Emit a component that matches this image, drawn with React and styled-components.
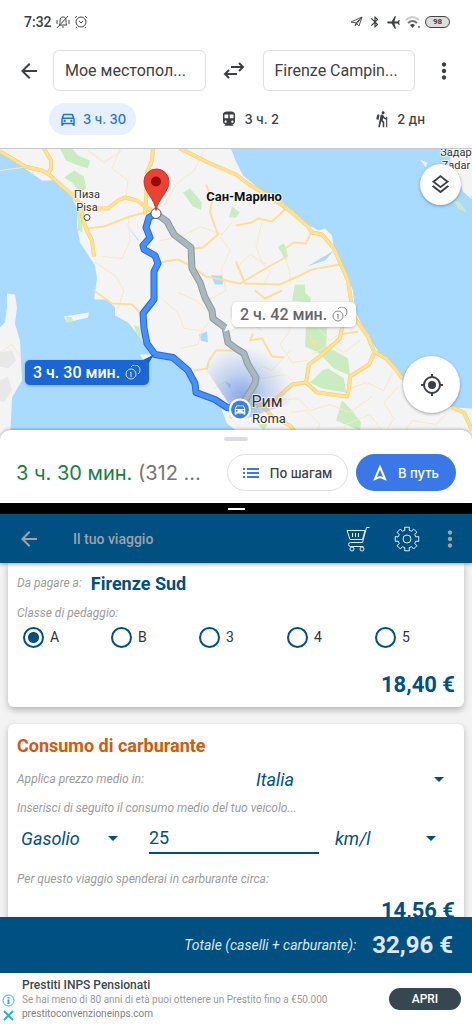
import { useState } from "react";
import styled, { createGlobalStyle, css } from "styled-components";
import {
  MdAirplanemodeActive,
  MdArrowBack,
  MdArrowDropDown,
  MdBluetooth,
  MdDirectionsCar,
  MdDirectionsTransit,
  MdHiking,
  MdMoreVert,
  MdOutlineDirectionsCar,
  MdOutlineLayers,
} from "react-icons/md";

const classes = ["A", "B", "3", "4", "5"];

function App() {
  return (
    <Screen>
      <GlobalStyle />
      <StatusBar />
      <Directions />
      <SplitHandle>
        <SplitGrip />
      </SplitHandle>
      <Trip />
    </Screen>
  );
}

export default App;

function StatusBar() {
  return (
    <StatusRow>
      <StatusGroup>
        <Clock>7:32</Clock>
        <BellOffIcon />
        <AlarmIcon />
      </StatusGroup>
      <StatusGroup>
        <PlaneOutlineIcon />
        <MdBluetooth size={14} />
        <Airplane size={15} />
        <WifiIcon />
        <Battery>98</Battery>
      </StatusGroup>
    </StatusRow>
  );
}

function Directions() {
  return (
    <>
      <SearchRow>
        <IconButton aria-label="Назад">
          <MdArrowBack size={24} />
        </IconButton>
        <PlaceInput aria-label="Откуда" defaultValue="Мое местопол..." />
        <IconButton aria-label="Поменять местами">
          <SwapIcon />
        </IconButton>
        <PlaceInput aria-label="Куда" defaultValue="Firenze Campin..." />
        <IconButton aria-label="Меню">
          <MdMoreVert size={26} />
        </IconButton>
      </SearchRow>
      <Modes>
        <Mode $active>
          <MdOutlineDirectionsCar size={18} />3 ч. 30
        </Mode>
        <Mode>
          <MdDirectionsTransit size={18} />3 ч. 2
        </Mode>
        <Mode>
          <MdHiking size={18} />2 дн
        </Mode>
      </Modes>
      <MapArea>
        <MapDrawing />
        <Callout $main>
          3 ч. 30 мин. <TollIcon />
        </Callout>
        <Callout>
          2 ч. 42 мин. <TollIcon />
        </Callout>
        <LayersButton aria-label="Слои">
          <MdOutlineLayers size={23} />
        </LayersButton>
        <LocateButton aria-label="Мое местоположение">
          <LocateIcon />
        </LocateButton>
      </MapArea>
      <Sheet>
        <SheetGrip />
        <SheetRow>
          <Duration>
            3 ч. 30 мин. <Distance>(312 ...</Distance>
          </Duration>
          <StepsButton>
            <StepsIcon />
            По шагам
          </StepsButton>
          <GoButton>
            <NavigateIcon />В путь
          </GoButton>
        </SheetRow>
      </Sheet>
    </>
  );
}

function Trip() {
  const [tollClass, setTollClass] = useState("A");

  return (
    <>
      <Toolbar>
        <ToolButton aria-label="Indietro">
          <MdArrowBack size={24} />
        </ToolButton>
        <ToolTitle>Il tuo viaggio</ToolTitle>
        <ToolButton aria-label="Carrello" $light>
          <CartIcon />
        </ToolButton>
        <ToolButton aria-label="Impostazioni" $light>
          <GearIcon />
        </ToolButton>
        <ToolButton aria-label="Menu">
          <MdMoreVert size={26} />
        </ToolButton>
      </Toolbar>
      <Cards>
        <TollCard>
          <ExitRow>
            <Hint>Da pagare a:</Hint>
            <ExitName>Firenze Sud</ExitName>
          </ExitRow>
          <ClassSet>
            <ClassLegend>Classe di pedaggio:</ClassLegend>
            <ClassGrid>
              {classes.map((c) => (
                <ClassLabel key={c}>
                  <Radio
                    type="radio"
                    name="toll-class"
                    value={c}
                    checked={tollClass === c}
                    onChange={() => setTollClass(c)}
                  />
                  {c}
                </ClassLabel>
              ))}
            </ClassGrid>
          </ClassSet>
          <TollPrice>18,40 €</TollPrice>
        </TollCard>
        <FuelCard>
          <FuelTitle>Consumo di carburante</FuelTitle>
          <CountryRow>
            <Hint as="label" htmlFor="country">
              Applica prezzo medio in:
            </Hint>
            <Picker id="country" options={["Italia"]} end={4} />
          </CountryRow>
          <Hint as="label" htmlFor="consumption">
            Inserisci di seguito il consumo medio del tuo veicolo...
          </Hint>
          <UsageRow>
            <Picker label="Carburante" options={["Gasolio", "Benzina"]} end={8} />
            <UsageInput id="consumption" defaultValue="25" />
            <Picker label="Unità" options={["km/l"]} end={12} />
          </UsageRow>
          <Hint>Per questo viaggio spenderai in carburante circa:</Hint>
          <Price>14,56 €</Price>
        </FuelCard>
      </Cards>
      <TotalBar>
        <TotalLabel>Totale (caselli + carburante):</TotalLabel>
        <TotalValue>32,96 €</TotalValue>
      </TotalBar>
      <Ad>
        <AdMarks>
          <AdInfoIcon />
          <AdCloseIcon />
        </AdMarks>
        <AdBody>
          <AdTitle>Prestiti INPS Pensionati</AdTitle>
          <AdText>
            Se hai meno di 80 anni di età puoi ottenere un Prestito fino a
            €50.000
          </AdText>
          <AdLink href="#">prestitoconvenzioneinps.com</AdLink>
        </AdBody>
        <AdButton>APRI</AdButton>
      </Ad>
    </>
  );
}

function Picker({ id, label, options, end }) {
  return (
    <PickerBox $end={end}>
      <Select id={id} aria-label={label}>
        {options.map((o) => (
          <option key={o}>{o}</option>
        ))}
      </Select>
      <MdArrowDropDown size={24} />
    </PickerBox>
  );
}

// map
const mainRoute =
  "M156 213L149 217L146 227L150 237L143 245L144 249L155 255L158 263L154 271L154 299L143 313L144 328L147 343L155 354L173 357L188 370L195 383L196 392L215 399L227 407L240 409";
const altRoute =
  "M156 213L167 221L174 234L191 247L192 268L200 282L205 297L212 310L213 318L225 327L228 342L236 348L244 353L248 364L256 377L255 383L249 393L240 409";

const highways = [
  "M0 151L12 158L25 166L42 170L49 174L60 184L72 194L80 204L90 208L108 208L118 200L125 197L137 200L145 206L156 213",
  "M44 148L51 160L51 168L47 175",
  "M153 148L152 160L147 172L146 200L145 214",
  "M80 204L83 218L86 228L92 240L94 256",
  "M180 148L208 162L236 174L249 184L270 196L287 208L308 226L312 232L322 234L334 248L341 264L348 280L351 300L355 318L368 336L374 351L386 358L396 369L402 378",
  "M374 353L369 364L350 376L349 388L347 396L317 392L306 382L309 364L322 354L340 338L342 326L355 318",
  "M306 382L292 384L281 394L270 402L240 409L230 417",
  "M262 404L272 416L290 425L302 440",
  "M452 407L464 412L472 430",
];

const roads = [
  "M86 228L104 226L130 216L145 212",
  "M159 262L178 259L192 266L206 276L240 283L262 270L287 256",
  "M236 225L252 222L258 218L272 221L286 208",
  "M285 248L294 242L306 243L311 232",
  "M206 184L212 200L210 212L218 234L203 247L194 248",
  "M236 261L245 283L280 284L300 275L312 269L340 264",
  "M194 370L207 368L209 360L216 350L236 350",
  "M94 290L112 303L132 304L140 312",
  "M253 333L250 340L262 338L272 356L284 357",
  "M340 334L358 331",
  "M310 334L312 342L316 341L314 349",
  "M255 290L265 298L282 290",
];

const lanes = [
  "M0 170L30 166M88 150L104 162L122 150M204 150L194 170L176 184L164 206",
  "M120 148L112 168L128 180L126 196",
  "M128 214L130 240L122 258L102 256",
  "M95 262L115 275L124 290L118 308",
  "M160 240L182 236L200 226L222 234L232 222",
  "M164 300L178 312L184 328L202 330L198 344L180 348",
  "M202 330L214 316L196 300L178 292",
  "M220 236L230 250L221 270L226 290L208 300",
  "M262 222L256 246L262 262L270 272L264 284",
  "M236 268L250 254L266 264M285 256L290 272L290 284",
  "M360 340L344 352L330 344L312 354M318 328L330 340L344 330",
  "M298 308L282 316L268 312L256 320M290 350L272 370L262 366L250 376",
  "M282 306L290 330L280 344L292 362L308 360",
  "M260 378L286 374L296 384M276 400L298 398L310 410L330 404L350 412L372 396",
  "M380 440L394 418L384 402L398 386M350 388L366 382L384 390L392 372",
  "M400 440L412 420L436 424L452 408M340 440L346 424L370 414L380 428",
  "M0 352L12 344L20 356M2 400L10 390",
  "M312 440L320 424L306 410L290 412",
  "M228 380L214 388M232 330L250 322L262 330",
];

function MapDrawing() {
  return (
    <MapSvg viewBox="0 148 472 292" preserveAspectRatio="xMidYMid slice">
      <defs>
        <radialGradient id="glow" cx="242" cy="396" r="50" gradientUnits="userSpaceOnUse">
          <stop offset="0" stopColor="#4d7fe0" stopOpacity="0.65" />
          <stop offset="0.5" stopColor="#4d7fe0" stopOpacity="0.28" />
          <stop offset="1" stopColor="#4d7fe0" stopOpacity="0" />
        </radialGradient>
      </defs>
      <rect y="148" width="472" height="292" fill="#a9daff" />
      <g fill="#f4f4f4">
        <path d="M0 148V152L25 168L42 180L55 180L72 197L78 210L77 225L80 242L95 265L97 278L94 299L107 299L115 307L115 315L128 322L140 337L147 347L152 354L140 354L143 359L152 356L170 358L180 368L192 380L195 393L220 405L227 423L236 430L250 440H472V408L453 407L420 398L406 387L399 373L379 352L366 333L355 310L353 290L344 268L334 248L332 235L325 228L319 230L309 225L283 202L259 188L243 175L236 161L231 148Z" />
        <path d="M7 293L15 294L17 307L15 323L20 340L22 380L12 397L10 440H0V327L5 322L7 307Z" />
        <path d="M64 316L89 312L88 317L67 322Z" />
        <path d="M420 159L427 162L426 167ZM452 148H472V196L462 184L456 172L450 160Z" />
        <path d="M460 180L470 190L472 199L463 191Z" />
      </g>
      <g fill="#e8e8e8">
        <path d="M0 352L12 350L16 360L8 368L0 366ZM0 380L8 376L12 390L4 402L0 400Z" />
      </g>
      <g fill="#c9ecc0">
        <path d="M60 148H72L78 155L90 160L88 168L76 164L66 160Z" />
        <path d="M64 177L74 170L84 176L86 188L80 192L72 182Z" />
        <path d="M183 192L190 188L202 202L201 209L193 206Z" />
        <path d="M232 206L240 212L236 217L229 217Z" />
        <path d="M78 210L83 216L82 232L78 230Z" />
        <path d="M278 246L284 243L286 248L288 256L284 257Z" />
        <path d="M295 284H305V292L311 298L310 302L292 300Z" />
        <path d="M306 327H327L326 346L334 350L348 358L350 375L334 368L318 352L305 346Z" />
        <path d="M310 382L322 370L328 368L344 378L346 392L322 388Z" />
        <path d="M342 400L352 410L361 422L360 430L336 420Z" />
        <path d="M66 316L72 317L73 321L67 322Z" />
        <path d="M134 325L139 326L143 340L137 334Z" />
        <path d="M258 424L268 423L264 430Z" />
        <path d="M454 200L460 202L467 212L458 208Z" />
      </g>
      <g fill="#a9daff">
        <path d="M211 275H223V284L215 284Z" />
        <path d="M199 334L207 331L208 342L201 340Z" />
        <path d="M307 266L334 250L325 260Z" />
        <path d="M225 381L231 384L230 388Z" />
        <path d="M125 222L140 241L138 240Z" />
      </g>
      <g fill="none" stroke="#fbe9bd" strokeWidth="1">
        {lanes.map((d) => (
          <path key={d} d={d} />
        ))}
      </g>
      <g fill="none" stroke="#fcdf98" strokeWidth="2" strokeLinejoin="round">
        {roads.map((d) => (
          <path key={d} d={d} />
        ))}
      </g>
      <g fill="none" strokeLinejoin="round">
        {highways.map((d) => (
          <path key={d} d={d} stroke="#f3cd6c" strokeWidth="4" />
        ))}
        {highways.map((d) => (
          <path key={d} d={d} stroke="#ffe18f" strokeWidth="3" />
        ))}
      </g>
      <path d="M240 420L204 366L190 340H300V400Z" fill="url(#glow)" />
      <g fill="none" strokeLinejoin="round" strokeLinecap="round">
        <path d={altRoute} stroke="#8b9a9f" strokeWidth="7" />
        <path d={altRoute} stroke="#a9b8be" strokeWidth="5" />
        <path d={mainRoute} stroke="#2769d2" strokeWidth="7" />
        <path d={mainRoute} stroke="#458fff" strokeWidth="5" />
      </g>
      <path d="M154 354L138 362V372H148V364Z" fill="#1a66d3" />
      <path d="M224 331L234 312V328Z" fill="#fff" />
      <circle cx="156" cy="213" r="5" fill="#fff" stroke="#555" />
      <path
        d="M156 210C155 198 144 192 144 181A12 12 0 0 1 169 181C169 192 158 198 156 210Z"
        fill="#ea4335"
        stroke="#c9352a"
        strokeWidth="1"
      />
      <circle cx="156" cy="181" r="5" fill="#960a0a" />
      <circle cx="240" cy="409" r="11" fill="#fff" />
      <circle cx="240" cy="409" r="9" fill="#3b7de9" />
      <g transform="translate(233 402)" color="#fff">
        <MdDirectionsCar size={14} />
      </g>
      <circle cx="87" cy="217" r="3" fill="#fff" stroke="#444" />
      <MapText x="87" y="197">Пиза</MapText>
      <MapText x="87" y="210">Pisa</MapText>
      <MapText x="456" y="155">Задар</MapText>
      <MapText x="456" y="168">Zadar</MapText>
      <MapText x="244" y="200" $bold>Сан-Марино</MapText>
      <MapText x="267" y="406" $large>Рим</MapText>
      <MapText x="269" y="422" $medium>Roma</MapText>
    </MapSvg>
  );
}

// icons
const BellOffIcon = () => (
  <svg width="14" height="14" viewBox="0 0 14 14" fill="none" stroke="#444" strokeWidth="1">
    <path d="M3 10C4 9 4 8 4 6C4 3 5 2 7 2S10 3 10 6C10 8 10 9 11 10ZM6 12H8M1 13L12 1M1 5V9M13 5V9" />
  </svg>
);

const AlarmIcon = () => (
  <svg width="14" height="14" viewBox="0 0 14 14" fill="none" stroke="#444" strokeWidth="1">
    <circle cx="7" cy="7" r="5" />
    <path d="M5 6L7 8L9 6M1 3L3 1M13 3L11 1M3 12L2 13M11 12L12 13" />
  </svg>
);

const PlaneOutlineIcon = () => (
  <svg width="14" height="14" viewBox="0 0 14 14" fill="none" stroke="#555" strokeWidth="1" strokeLinejoin="round">
    <path d="M1 7L12 2L9 11L6 8ZM6 8L12 2L5 11Z" />
  </svg>
);

const WifiIcon = () => (
  <svg width="16" height="14" viewBox="0 0 16 14" fill="none" strokeWidth="2">
    <path d="M1 5Q7.500 -1 14 5" stroke="#ccc" />
    <path d="M3 8Q7.500 4 12 8" stroke="#777" />
    <path d="M5 10Q7.500 8 10 10L7.500 13Z" fill="#444" />
    <path d="M13 12H15" stroke="#888" />
  </svg>
);

const SwapIcon = () => (
  <svg width="22" height="18" viewBox="0 0 22 18" fill="none" stroke="#3c4043" strokeWidth="2">
    <path d="M8 5H20M16 1L20 5L16 9M14 12H2M6 8L2 12L6 16" />
  </svg>
);

const TollIcon = () => (
  <svg width="16" height="16" viewBox="0 0 16 16" fill="none" stroke="currentColor" strokeWidth="1" opacity="0.8">
    <circle cx="6" cy="9" r="5" />
    <path d="M6 2A5 5 0 1 1 13 9M5 8L6 7V12" />
  </svg>
);

const LocateIcon = () => (
  <svg width="24" height="24" viewBox="0 0 24 24" fill="none" stroke="#3c4043" strokeWidth="2">
    <circle cx="12" cy="12" r="8" />
    <circle cx="12" cy="12" r="4" fill="#3c4043" stroke="none" />
    <path d="M12 1V5M12 19V23M1 12H5M19 12H23" />
  </svg>
);

const StepsIcon = () => (
  <svg width="16" height="12" viewBox="0 0 16 12" stroke="#3b78e7" strokeWidth="2">
    <path d="M0 2H2M0 6H2M0 10H2M4 2H16M4 6H16M4 10H16" />
  </svg>
);

const NavigateIcon = () => (
  <svg width="14" height="17" viewBox="0 0 14 17" fill="none" stroke="#fff" strokeWidth="2">
    <path d="M7 3L12 15L7 13L2 15Z" />
  </svg>
);

const CartIcon = () => (
  <svg width="24" height="26" viewBox="0 0 24 26" fill="none" stroke="currentColor" strokeWidth="1">
    <path d="M23.500 1.500H20.500L16.500 16.500H4.500Q2.500 16.500 2.500 18.500T4.500 20.500H17.500M1 4.500H19L16.500 13.500H4ZM6.500 7V11M9.500 7V11M12.500 7V11" />
    <circle cx="6" cy="23" r="2" />
    <circle cx="16" cy="23" r="2" />
  </svg>
);

// eight teeth, each one from the root circle out to the rim and back
const gearPath = Array.from({ length: 8 }, (_, i) =>
  [
    [-0.24, 9],
    [-0.2, 12],
    [0.2, 12],
    [0.24, 9],
  ]
    .map(([turn, r]) => {
      const a = (i * Math.PI) / 4 + turn;
      return `${(13 + r * Math.sin(a)).toFixed(2)} ${(13 - r * Math.cos(a)).toFixed(2)}`;
    })
    .join("L")
).join("L");

const GearIcon = () => (
  <svg width="26" height="26" viewBox="0 0 26 26" fill="none" stroke="currentColor" strokeLinejoin="round">
    <path d={`M${gearPath}Z`} />
    <circle cx="13" cy="13" r="4" />
  </svg>
);

const AdInfoIcon = () => (
  <svg width="13" height="13" viewBox="0 0 13 13" fill="none" stroke="#22b3d2">
    <circle cx="6.500" cy="6.500" r="5.500" />
    <path d="M6.500 3V4.500M6.500 5.500V10" strokeWidth="2" />
  </svg>
);

const AdCloseIcon = () => (
  <svg width="13" height="13" viewBox="0 0 13 13" stroke="#22b3d2" strokeWidth="2">
    <path d="M2 2L11 11M11 2L2 11" />
  </svg>
);

const GlobalStyle = createGlobalStyle`
  * {
    box-sizing: border-box;
  }

  body {
    margin: 0;
    font-family: Roboto, "Liberation Sans", sans-serif;
    color: #3c4043;
  }

  button,
  input,
  select {
    font-family: inherit;
    margin: 0;
  }

  svg {
    flex: none;
  }
`;

const Screen = styled.main`
  height: 100vh;
  display: flex;
  flex-direction: column;
  overflow: hidden;
  background: #fff;

  & > * {
    flex: none;
  }
`;

const StatusRow = styled.header`
  display: flex;
  align-items: center;
  justify-content: space-between;
  padding: 12px 22px 12px 24px;
`;

const StatusGroup = styled.div`
  display: flex;
  align-items: center;
  gap: 4px;
  height: 20px;
`;

const Clock = styled.span`
  font-size: 14px;
  font-weight: 500;
`;

const Airplane = styled(MdAirplanemodeActive)`
  transform: rotate(-90deg);
`;

const Battery = styled.span`
  width: 25px;
  height: 12px;
  border: 1px solid #444;
  border-radius: 6px;
  background: #ddd;
  font-size: 8px;
  line-height: 10px;
  font-weight: 700;
  text-align: center;
`;

const SearchRow = styled.div`
  display: grid;
  grid-template-columns: 41px 1fr 33px 1fr 33px;
  column-gap: 12px;
  align-items: center;
  padding: 6px 12px 12px 0;
`;

const IconButton = styled.button`
  display: flex;
  align-items: center;
  justify-content: center;
  padding: 0;
  border: none;
  background: none;
  color: #3c4043;
  cursor: pointer;

  &:first-child {
    padding-left: 16px;
  }
`;

const PlaceInput = styled.input`
  width: 100%;
  min-width: 0;
  height: 41px;
  padding: 0 11px;
  border: 1px solid #dfe0e2;
  border-radius: 6px;
  color: #3c4043;
  font-size: 16px;
  text-overflow: ellipsis;
`;

const Modes = styled.nav`
  display: flex;
  justify-content: space-between;
  padding: 0 37px 13px 49px;
`;

const Mode = styled.button`
  display: flex;
  align-items: center;
  gap: 6px;
  height: 32px;
  padding: 0 10px;
  border: none;
  border-radius: 16px;
  background: ${(props) => (props.$active ? "#e8f0fe" : "none")};
  color: ${(props) => (props.$active ? "#1a73e8" : "#3c4043")};
  font-family: Inter, sans-serif;
  font-size: 13px;
  font-weight: 500;
  cursor: pointer;
`;

const MapArea = styled.section`
  position: relative;
  height: 292px;
  overflow: hidden;
  border-top: 1px solid #c4c8ca;
`;

const MapSvg = styled.svg`
  display: block;
  width: 100%;
  height: 100%;
`;

const MapText = styled.text`
  font-size: ${(props) => (props.$large ? 16 : props.$medium ? 13 : 11)}px;
  font-weight: ${(props) => (props.$bold ? 700 : 400)};
  text-anchor: middle;
  fill: #333;
  stroke: rgba(255, 255, 255, 0.7);
  stroke-width: 2px;
  paint-order: stroke;

  ${(props) =>
    props.$bold &&
    css`
      font-size: 13px;
      fill: #111;
    `}
`;

const Callout = styled.div`
  position: absolute;
  display: flex;
  align-items: center;
  gap: 5px;
  height: 25px;
  padding: 0 8px;
  border-radius: 5px;
  font-size: 16px;
  font-weight: 500;
  box-shadow: 0 1px 3px rgba(0, 0, 0, 0.25);

  ${(props) =>
    props.$main
      ? css`
          left: 25px;
          top: 211px;
          background: #1a66d3;
          color: #fff;
        `
      : css`
          left: 232px;
          top: 153px;
          background: #fff;
          color: #666;
        `}
`;

const RoundButton = styled.button`
  position: absolute;
  display: flex;
  align-items: center;
  justify-content: center;
  padding: 0;
  border: none;
  border-radius: 50%;
  background: #fff;
  color: #3c4043;
  box-shadow: 0 1px 3px rgba(0, 0, 0, 0.35);
  cursor: pointer;
`;

const LayersButton = styled(RoundButton)`
  top: 15px;
  right: 11px;
  width: 41px;
  height: 41px;
`;

const LocateButton = styled(RoundButton)`
  top: 207px;
  right: 12px;
  width: 57px;
  height: 57px;
`;

const Sheet = styled.section`
  position: relative;
  margin-top: -10px;
  padding: 7px 16px 12px;
  border-radius: 10px 10px 0 0;
  background: #fff;
  box-shadow: 0 -1px 3px rgba(0, 0, 0, 0.25);
`;

const SheetGrip = styled.div`
  width: 24px;
  height: 4px;
  margin: 0 auto 13px;
  border-radius: 2px;
  background: #dadce0;
`;

const SheetRow = styled.div`
  display: flex;
  align-items: center;
  gap: 8px;
`;

const Duration = styled.p`
  flex: 1;
  margin: 0;
  font-family: Inter, sans-serif;
  font-size: 20px;
  white-space: nowrap;
  color: #15803d;
`;

const Distance = styled.span`
  color: #757575;
`;

const PillButton = styled.button`
  display: flex;
  align-items: center;
  justify-content: center;
  gap: 11px;
  height: 37px;
  border-radius: 19px;
  font-family: Inter, sans-serif;
  font-size: 13px;
  font-weight: 500;
  white-space: nowrap;
  padding: 0;
  cursor: pointer;
`;

const StepsButton = styled(PillButton)`
  width: 121px;
  border: 1px solid #dfe0e2;
  background: #fff;
  color: #3c4043;
`;

const GoButton = styled(PillButton)`
  width: 100px;
  border: none;
  background: #3b78e7;
  color: #fff;
`;

const SplitHandle = styled.div`
  display: flex;
  align-items: center;
  justify-content: center;
  height: 11px;
  background: #000;
`;

const SplitGrip = styled.div`
  width: 17px;
  height: 2px;
  background: #fff;
`;

const Toolbar = styled.header`
  position: relative;
  z-index: 1;
  display: flex;
  align-items: center;
  gap: 24px;
  height: 49px;
  padding: 0 9px 0 17px;
  background: #005082;
  box-shadow: 0 1px 4px rgba(0, 0, 0, 0.4);
`;

const ToolButton = styled.button`
  display: flex;
  padding: 0;
  border: none;
  background: none;
  color: ${(props) => (props.$light ? "#e3edf3" : "#a3a3a3")};
  cursor: pointer;

  &:last-child {
    margin-left: -7px;
  }
`;

const ToolTitle = styled.h1`
  flex: 1;
  margin: 0 0 0 8px;
  font-size: 14px;
  font-weight: 500;
  color: #a3a3a3;
`;

const Cards = styled.div`
  && {
    flex: 1;
  }

  min-height: 0;
  overflow: hidden;
  padding: 0 8px;
  background: #f3f3f3;
`;

const Card = styled.section`
  display: flex;
  flex-direction: column;
  padding: 0 9px;
  background: #fff;
  box-shadow: 0 3px 6px rgba(0, 0, 0, 0.25);
`;

const TollCard = styled(Card)`
  padding-top: 8px;
  padding-bottom: 9px;
  border-radius: 0 0 6px 6px;
`;

const FuelCard = styled(Card)`
  margin-top: 17px;
  padding-top: 10px;
  border-radius: 6px;
`;

const ExitRow = styled.div`
  display: flex;
  align-items: center;
  gap: 9px;
  height: 24px;
`;

const Hint = styled.span`
  font-size: 12px;
  line-height: 16px;
  font-style: italic;
  color: #9b9b9b;
`;

const ExitName = styled.strong`
  font-size: 18px;
  color: #005082;
`;

const ClassSet = styled.fieldset`
  margin: 10px 0 0;
  padding: 0;
  border: none;
`;

const ClassLegend = styled.legend`
  padding: 0;
  font-size: 12px;
  line-height: 16px;
  font-style: italic;
  color: #9b9b9b;
`;

const ClassGrid = styled.div`
  display: grid;
  grid-template-columns: repeat(4, 1fr) 80px;
  padding: 5px 0 0 6px;
`;

const ClassLabel = styled.label`
  display: flex;
  align-items: center;
  gap: 6px;
  height: 22px;
  font-size: 14px;
  color: #333;
`;

const Radio = styled.input`
  appearance: none;
  width: 21px;
  height: 21px;
  border: 2px solid #005082;
  border-radius: 50%;
  background: ${(props) =>
    props.checked ? "radial-gradient(#005082 5px, #fff 6px)" : "#fff"};
`;

const Price = styled.output`
  margin-top: 11px;
  font-size: 22px;
  line-height: 26px;
  font-weight: 700;
  text-align: right;
  color: #005082;
`;

const TollPrice = styled(Price)`
  margin-top: 24px;
`;

const FuelTitle = styled.h2`
  margin: 0;
  font-size: 18px;
  line-height: 24px;
  font-weight: 700;
  color: #d35a0a;
`;

const CountryRow = styled.div`
  display: grid;
  grid-template-columns: 239px 1fr;
  align-items: center;
  padding: 7px 0;
`;

const UsageRow = styled.div`
  display: grid;
  grid-template-columns: 112px 1fr 120px;
  column-gap: 16px;
  align-items: center;
  padding: 6px 0 17px 4px;
`;

const PickerBox = styled.div`
  display: flex;
  align-items: center;
  padding-right: ${(props) => props.$end}px;
  color: #005082;

  svg {
    margin-left: -24px;
    pointer-events: none;
  }
`;

const Select = styled.select`
  appearance: none;
  flex: 1;
  min-width: 0;
  height: 28px;
  padding: 0;
  border: none;
  background: none;
  color: inherit;
  font-size: 18px;
  font-style: italic;
`;

const UsageInput = styled.input`
  width: 100%;
  min-width: 0;
  height: 32px;
  padding: 0;
  border: none;
  border-bottom: 2px solid #005082;
  border-radius: 0;
  color: #005082;
  font-size: 18px;
`;

const TotalBar = styled.footer`
  display: flex;
  align-items: center;
  justify-content: flex-end;
  gap: 16px;
  height: 56px;
  padding: 0 19px;
  background: #005082;
  color: #dfe7ee;
`;

const TotalLabel = styled.span`
  font-size: 14px;
  font-style: italic;
`;

const TotalValue = styled.strong`
  font-size: 24px;
`;

const Ad = styled.aside`
  display: flex;
  align-items: center;
  height: 51px;
  padding: 0 11px 0 2px;
  background: #fff;
`;

const AdMarks = styled.div`
  display: flex;
  flex-direction: column;
  align-self: flex-end;
  gap: 2px;
  width: 20px;
  padding-bottom: 2px;
`;

const AdBody = styled.div`
  display: flex;
  flex: 1;
  flex-direction: column;
  min-width: 0;
  padding-top: 2px;
  font-size: 10px;
  line-height: 14px;
  color: #999;
  white-space: nowrap;
`;

const AdTitle = styled.strong`
  font-size: 12px;
  line-height: 15px;
  font-weight: 500;
  color: #37474f;
`;

const AdText = styled.span``;

const AdLink = styled.a`
  color: #808080;
  text-decoration: none;
`;

const AdButton = styled.button`
  width: 72px;
  height: 22px;
  padding: 0;
  border: none;
  border-radius: 11px;
  background: #37474f;
  color: #fff;
  font-size: 12px;
  font-weight: 500;
  cursor: pointer;
`;
